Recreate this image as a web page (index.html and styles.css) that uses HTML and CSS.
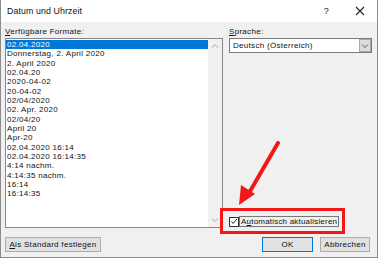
FILE: index.html
```html
<!DOCTYPE html>
<html>
<head>
<meta charset="utf-8">
<link rel="stylesheet" href="styles.css">
</head>
<body>
<div class="dialog">
  <div class="titlebar">
    <span class="title">Datum und Uhrzeit</span>
    <span class="help">?</span>
    <svg class="close" width="10" height="10" viewBox="0 0 10 10"><path d="M1 1L9 9M9 1L1 9" stroke="#222" stroke-width="1.1" fill="none"/></svg>
  </div>
  <div class="body">
    <div class="main">
      <div class="left">
        <div class="label"><u>V</u>erfügbare Formate:</div>
        <div class="listbox">
          <ul class="items">
            <li class="selected">02.04.2020</li>
            <li>Donnerstag, 2. April 2020</li>
            <li>2. April 2020</li>
            <li>02.04.20</li>
            <li>2020-04-02</li>
            <li>20-04-02</li>
            <li>02/04/2020</li>
            <li>02. Apr. 2020</li>
            <li>02/04/20</li>
            <li>April 20</li>
            <li>Apr-20</li>
            <li>02.04.2020 16:14</li>
            <li>02.04.2020 16:14:35</li>
            <li>4:14 nachm.</li>
            <li>4:14:35 nachm.</li>
            <li>16:14</li>
            <li>16:14:35</li>
          </ul>
          <div class="scrollbar">
            <svg width="8" height="6" viewBox="0 0 8 6"><path d="M1 4.5L4 1.5L7 4.5" stroke="#a6a6a6" stroke-width="1" fill="none"/></svg>
            <svg width="8" height="6" viewBox="0 0 8 6"><path d="M1 1.5L4 4.5L7 1.5" stroke="#a6a6a6" stroke-width="1" fill="none"/></svg>
          </div>
        </div>
      </div>
      <div class="right">
        <div class="label"><u>S</u>prache:</div>
        <div class="combo">
          <span class="combo-text">Deutsch (Österreich)</span>
          <span class="drop"><svg width="8" height="6" viewBox="0 0 8 6"><path d="M1 1.5L4 4.5L7 1.5" stroke="#555" stroke-width="1" fill="none"/></svg></span>
        </div>
        <div class="check">
          <span class="box"><svg width="9" height="9" viewBox="0 0 9 9"><path d="M1.5 4.5L3.5 6.8L7.8 1.5" stroke="#222" stroke-width="1.1" fill="none"/></svg></span>
          <span class="check-text">A<u>u</u>tomatisch aktualisieren</span>
        </div>
      </div>
    </div>
    <div class="buttons">
      <button class="btn std"><u>A</u>ls Standard festlegen</button>
      <button class="btn ok">OK</button>
      <button class="btn cancel">Abbrechen</button>
    </div>
  </div>
  <div class="mark"></div>
  <svg class="arrow" width="60" height="70" viewBox="0 0 60 70">
    <path d="M43 2L14 52" stroke="#f01818" stroke-width="4" stroke-linecap="round" fill="none"/>
    <path d="M4 64L6 44L20 53Z" fill="#f01818"/>
  </svg>
</div>
</body>
</html>
```
FILE: styles.css
```css
* { box-sizing: border-box; }
html, body { margin: 0; padding: 0; }
body {
  width: 378px;
  height: 259px;
  background: #ffffff;
  font-family: "Liberation Sans", Arial, sans-serif;
  font-size: 8px;
  letter-spacing: 0.3px;
  color: #111;
  overflow: hidden;
}
.dialog {
  position: relative;
  width: 378px;
  height: 258px;
  border: 1px solid #8c8c8c;
  border-top: none;
  background: #f0f0f0;
  display: flex;
  flex-direction: column;
}
.titlebar {
  height: 22px;
  background: #fff;
  display: flex;
  align-items: center;
  padding-left: 6px;
  flex: none;
}
.title { font-size: 8.8px; letter-spacing: 0.1px; flex: 1; }
.help { font-size: 9px; margin-right: 26px; color: #222; }
.close { margin-right: 12px; }
.body {
  padding: 4px 5px 0 4px;
  display: flex;
  flex-direction: column;
}
.main {
  display: flex;
  gap: 6px;
}
.label { height: 12px; line-height: 12px; white-space: nowrap; }
.left { width: 218px; display: flex; flex-direction: column; }
.listbox {
  height: 190px;
  border: 1px solid #828790;
  background: #fff;
  display: flex;
  padding-top: 1px;
}
.items {
  list-style: none;
  margin: 0;
  padding: 0;
  flex: 1;
}
.items li {
  height: 9.33px;
  line-height: 9.33px;
  padding-left: 1px;
  white-space: nowrap;
}
.items li.selected { background: #0078d7; color: #fff; }
.scrollbar {
  width: 14px;
  margin-top: -1px;
  background: #f0f0f0;
  display: flex;
  flex-direction: column;
  justify-content: space-between;
  align-items: center;
  padding: 4px 0 4px;
}
.right { width: 143px; display: flex; flex-direction: column; }
.combo {
  height: 15px;
  border: 1px solid #7a7a7a;
  background: #fff;
  display: flex;
  align-items: center;
}
.combo-text { flex: 1; padding-left: 3px; }
.drop {
  width: 12px;
  height: 100%;
  background: #dcdcdc;
  border: 1px solid #a8a8a8;
  display: flex;
  align-items: center;
  justify-content: center;
}
.check {
  margin-top: auto;
  height: 11px;
  display: flex;
  align-items: center;
  margin-bottom: 1px;
}
.box {
  width: 10px;
  height: 10px;
  border: 1px solid #333;
  background: #fff;
  display: flex;
  align-items: center;
  justify-content: center;
}
.check-text {
  margin-left: 0;
  border: 1px solid #777;
  height: 11px;
  line-height: 9px;
  padding: 0 1px;
  letter-spacing: 0.2px;
  white-space: nowrap;
}
.buttons {
  display: flex;
  margin-top: 9px;
  gap: 7px;
}
.btn {
  height: 15px;
  font-family: inherit;
  font-size: 8px;
  letter-spacing: 0.3px;
  background: #e1e1e1;
  border: 1px solid #adadad;
  padding: 0;
  color: #111;
  line-height: 12px;
}
.std { width: 96px; }
.ok { width: 51px; margin-left: auto; border-color: #0078d7; }
.cancel { width: 50px; margin-right: 2px; }
.mark {
  position: absolute;
  left: 219px;
  top: 208px;
  width: 125px;
  height: 26px;
  border: 3px solid #f01818;
}
.arrow {
  position: absolute;
  left: 234px;
  top: 141px;
}
```
